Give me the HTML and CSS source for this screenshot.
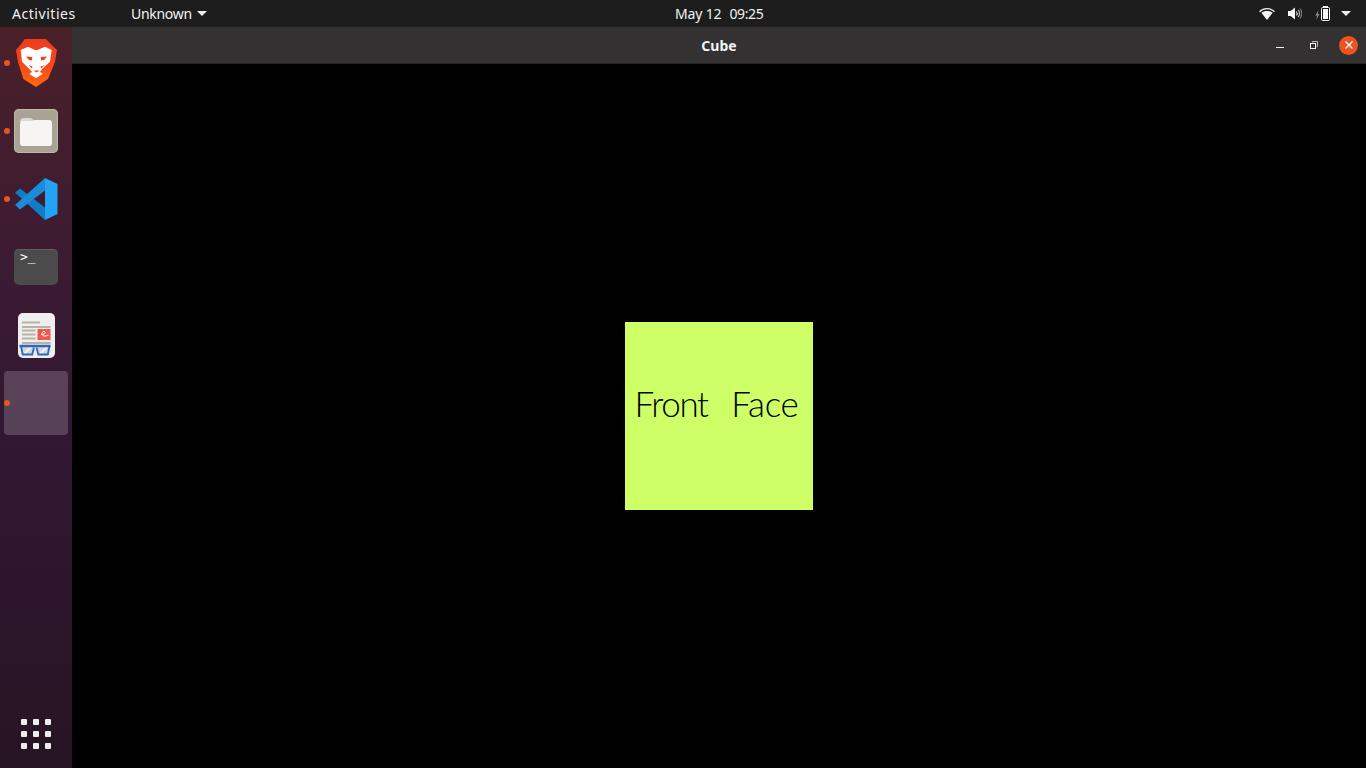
FILE: index.html
```html
<!DOCTYPE html>
<html lang="en">
<head>
<meta charset="utf-8">
<title>Cube</title>
<link rel="stylesheet" href="styles.css">
</head>
<body>
<div class="desktop">
  <header class="topbar">
    <div class="top-left">
      <span class="activities">Activities</span>
      <span class="appmenu"><span class="appname">Unknown</span><svg class="caret" width="10" height="5" viewBox="0 0 10 5"><path d="M0 0h10L5 5z" fill="#f2f2f2"/></svg></span>
    </div>
    <div class="clock"><span class="date">May 12</span><span class="time">09:25</span></div>
    <div class="tray">
      <svg class="wifi" width="16" height="12" viewBox="0 0 16 12"><path d="M8 12 2.400 4.800C3.900 3.700 5.900 3.100 8 3.100s4.100.6 5.600 1.700z" fill="#f6f6f6"/><path d="M.5 3.800C2.500 1.900 5.100.7 8 .7s5.500 1.200 7.500 3.100" fill="none" stroke="#f0f0f0" stroke-width="1.200"/></svg>
      <svg class="vol" width="14" height="13" viewBox="0 0 14 13"><path d="M0 4h2.600L7 .5v12L2.600 9H0z" fill="#f6f6f6"/><path d="M8.500 4.500c.8 1.200.8 2.800 0 4" fill="none" stroke="#e4e4e4" stroke-width="1.100"/><path d="M10.300 3c1.500 2.100 1.500 4.900 0 7" fill="none" stroke="#c4c4c4" stroke-width="1.100"/><path d="M12 1.500c2.200 3.100 2.200 6.900 0 10" fill="none" stroke="#9a9a9a" stroke-width="1"/></svg>
      <svg class="batt" width="15" height="15" viewBox="0 0 15 15"><path d="M3.500 4 .3 9.500h1.900L1.200 14l3.300-6H2.800z" fill="#8a8a8a"/><path d="M8 1V0h5v1z" fill="#f6f6f6"/><rect x="6.500" y="1.500" width="8" height="13" rx="1" fill="none" stroke="#f6f6f6"/><rect x="8" y="3" width="5" height="10" fill="#f6f6f6"/></svg>
      <svg class="caret" width="10" height="5" viewBox="0 0 10 5"><path d="M0 0h10L5 5z" fill="#f2f2f2"/></svg>
    </div>
  </header>
  <div class="workspace">
    <nav class="dock">
      <div class="dock-item running brave">
        <svg width="41" height="48" viewBox="0 0 41 48">
          <defs><linearGradient id="bg" x1="0" y1="0" x2="0" y2="1"><stop offset="0" stop-color="#ee3a1f"/><stop offset=".55" stop-color="#f8481a"/><stop offset="1" stop-color="#fd6a12"/></linearGradient></defs>
          <path d="M8.700 0H30l4 4.300L41 11l-2 11.700L32 40l-12 8-12.700-8L2 22.700 0 11l5.700-6.700z" fill="url(#bg)"/>
          <path d="M4.700 11 12 7.700 19 11h2.500L29 7.700 35.700 11 34 22.700 27 29l-3 3.700 2.700 2.300-6.700 4-6.700-4 2.700-2.300-3.700-3.700L6 22.700z" fill="#fff"/>
          <path d="M10 17.500l6.300 .5-.4 3.500-3-.5zM31 17.500l-6.300 .5.400 3.500 3-.5z" fill="#f2431d"/>
          <path d="M12.500 26l4 1.500-.5 2zM28.500 26l-4 1.500.5 2z" fill="#f2431d"/>
          <path d="M17.500 31.500h6L20.500 33.500z" fill="#f2431d"/>
        </svg>
      </div>
      <div class="dock-item running">
        <div class="tile tile-files">
          <svg width="32" height="29" viewBox="0 0 32 29"><path d="M0 5a4 4 0 0 1 4-4h7l5 4z" fill="#dcd9ce"/><path d="M0 7a3 3 0 0 1 3-3h8l4-1h14a3 3 0 0 1 3 3v20a3 3 0 0 1-3 3H3a3 3 0 0 1-3-3z" fill="#f6f5f3"/></svg>
        </div>
      </div>
      <div class="dock-item running">
        <svg width="44" height="42" viewBox="0 0 44 42">
          <path d="M6 10.500 1 14.500 31 42V29.500z" fill="#0f7cc4"/>
          <path d="M31 0v12.500L6 31.500 1 27z" fill="#1c8cd8"/>
          <path d="M31 0l12.500 6v30L31 42z" fill="#22a3f5"/>
        </svg>
      </div>
      <div class="dock-item">
        <div class="tile tile-term"><span class="prompt">&gt;_</span></div>
      </div>
      <div class="dock-item">
        <svg width="37" height="45" viewBox="0 0 37 45">
          <rect width="37" height="45" rx="5" fill="#eeeeee"/>
          <path d="M4 9.500h18M4 14h28.500M4 17.500h13.500M4 21.500h13.500M4 25.500h13.500M4 30h28.500" stroke="#b9b3a2" stroke-width="2"/>
          <rect x="19.500" y="16" width="13" height="11" fill="#f1584c"/>
          <path d="M23 21.500c3 0 5-1 4-2.500s-3 0-3 2 3 3 6.500 1" fill="none" stroke="#fff"/>
          <path d="M2.500 33h13l-1.500 8.500H5zM18 33h13l-1.500 8.500H20z" fill="#d6d6d6"/>
          <path d="M6 41l7-7M22 41l7-7" stroke="#f2f2f2" stroke-width="2"/>
          <path d="M1.500 33h31" stroke="#2b69c2" stroke-width="2.500"/>
          <path d="M3 33l1.700 8.500h9.500l1.800-7M31.500 33l-1.700 8.500h-9.500L18.500 34.500" fill="none" stroke="#2b69c2" stroke-width="1.800"/>
        </svg>
      </div>
      <div class="dock-item running active"></div>
      <div class="dock-grid" aria-label="Show Applications">
        <i></i><i></i><i></i><i></i><i></i><i></i><i></i><i></i><i></i>
      </div>
    </nav>
    <main class="window">
      <div class="titlebar">
        <span class="title">Cube</span>
        <div class="controls">
          <svg class="min" width="8" height="1" viewBox="0 0 8 1"><path d="M0 0h8v1H0z" fill="#f2f2f2"/></svg>
          <svg class="max" width="8" height="8" viewBox="0 0 8 8"><path d="M2.500 1.500V.5h5v5h-1" fill="none" stroke="#bdbdbd"/><rect x=".5" y="2.500" width="5" height="5" fill="none" stroke="#f2f2f2"/></svg>
          <span class="close"><svg width="8" height="8" viewBox="0 0 8 8"><path d="M.5.5l7 7M7.500.5l-7 7" stroke="#fff" stroke-width="1.300"/></svg></span>
        </div>
      </div>
      <div class="canvas">
        <div class="face"><p class="face-label"><span class="word-front">Front</span> <span class="word-face">Face</span></p></div>
      </div>
    </main>
  </div>
</div>
</body>
</html>
```
FILE: styles.css
```css
* { box-sizing: border-box; }
html, body { margin: 0; height: 100%; background: #000; overflow: hidden; }
body { font-family: "Noto Sans", "Open Sans", sans-serif; color: #f2f2f2; }
svg { display: block; flex: none; }
.desktop { width: 1366px; height: 768px; display: flex; flex-direction: column; }

.topbar {
  height: 27px; flex: none; background: #1d1d1d;
  display: grid; grid-template-columns: 675px auto 1fr; align-items: center;
  font-size: 14px; line-height: 27px;
}
.top-left { display: flex; align-items: center; padding-left: 12px; }
.activities { width: 119px; letter-spacing: .55px; }
.appmenu { display: flex; align-items: center; gap: 5px; }
.appname { letter-spacing: -.3px; }
.clock { display: flex; gap: 8px; }
.date { letter-spacing: -.15px; }
.time { letter-spacing: -.4px; }
.tray { display: flex; align-items: center; justify-content: flex-end; padding-right: 15px; }
.wifi { margin-right: 13px; }
.vol { margin-right: 13px; }
.batt { margin-right: 11px; }

.workspace { flex: 1; display: flex; min-height: 0; }
.dock {
  width: 72px; flex: none; padding-top: 2px;
  display: flex; flex-direction: column; align-items: stretch;
  background: linear-gradient(180deg, #4a2029 0%, #3c1b32 30%, #321833 55%, #271423 100%);
}
.dock-item {
  position: relative; height: 68px; flex: none;
  display: flex; align-items: center; justify-content: center;
}
.brave { padding-left: 1px; }
.dock-item.running::before {
  content: ""; position: absolute; left: 4px; top: 31px;
  width: 6px; height: 6px; border-radius: 50%; background: #e95420;
}
.dock-item.active::after {
  content: ""; position: absolute; left: 4px; top: 2px;
  width: 64px; height: 64px; border-radius: 4px; background: rgba(255,255,255,.18);
}
.dock-item.active::before { z-index: 1; }
.tile { width: 44px; border-radius: 5px; display: flex; }
.tile-files {
  height: 44px; background: #a8a392; align-items: center; justify-content: center;
  box-shadow: inset 0 0 0 1px #bcb8aa;
}
.tile-term {
  height: 36px; background: #4b4b4b; padding: 1px 0 0 6px;
  box-shadow: inset 0 1px 0 #5e5e5e;
}
.prompt { font: 13px/14px "DejaVu Sans Mono", monospace; color: #fff; }
.dock-grid {
  margin-top: auto; margin-bottom: 19px; align-self: center;
  display: grid; grid-template-columns: repeat(3, 6px); gap: 6px;
}
.dock-grid i { width: 6px; height: 6px; border-radius: 1px; background: #eeeeee; }

.window { flex: 1; display: flex; flex-direction: column; min-width: 0; }
.titlebar {
  height: 37px; flex: none; position: relative; background: #333132;
  border-bottom: 1px solid #242424;
  display: flex; align-items: center; justify-content: center;
}
.title { font-size: 14px; font-weight: 700; color: #f4f4f4; }
.controls {
  position: absolute; right: 8px; top: 0; height: 36px;
  display: flex; align-items: center;
}
.min { margin-right: 26px; margin-top: 4px; }
.max { margin-right: 21px; }
.close {
  width: 19px; height: 19px; border-radius: 50%; background: #e95420;
  display: flex; align-items: center; justify-content: center;
}
.canvas { flex: 1; background: #000; display: flex; align-items: center; justify-content: center; }
.face {
  width: 188px; height: 188px; background: #ceff66;
  display: flex; align-items: center; justify-content: center;
}
.face-label {
  margin: -27px 0 0; padding-right: 5px;
  font-family: "Lato", "Liberation Sans", sans-serif; font-weight: 300;
  font-size: 35px; color: #000; white-space: nowrap; word-spacing: 14px;
}
.word-front { letter-spacing: -1.4px; }
.word-face { letter-spacing: -.3px; }
```
